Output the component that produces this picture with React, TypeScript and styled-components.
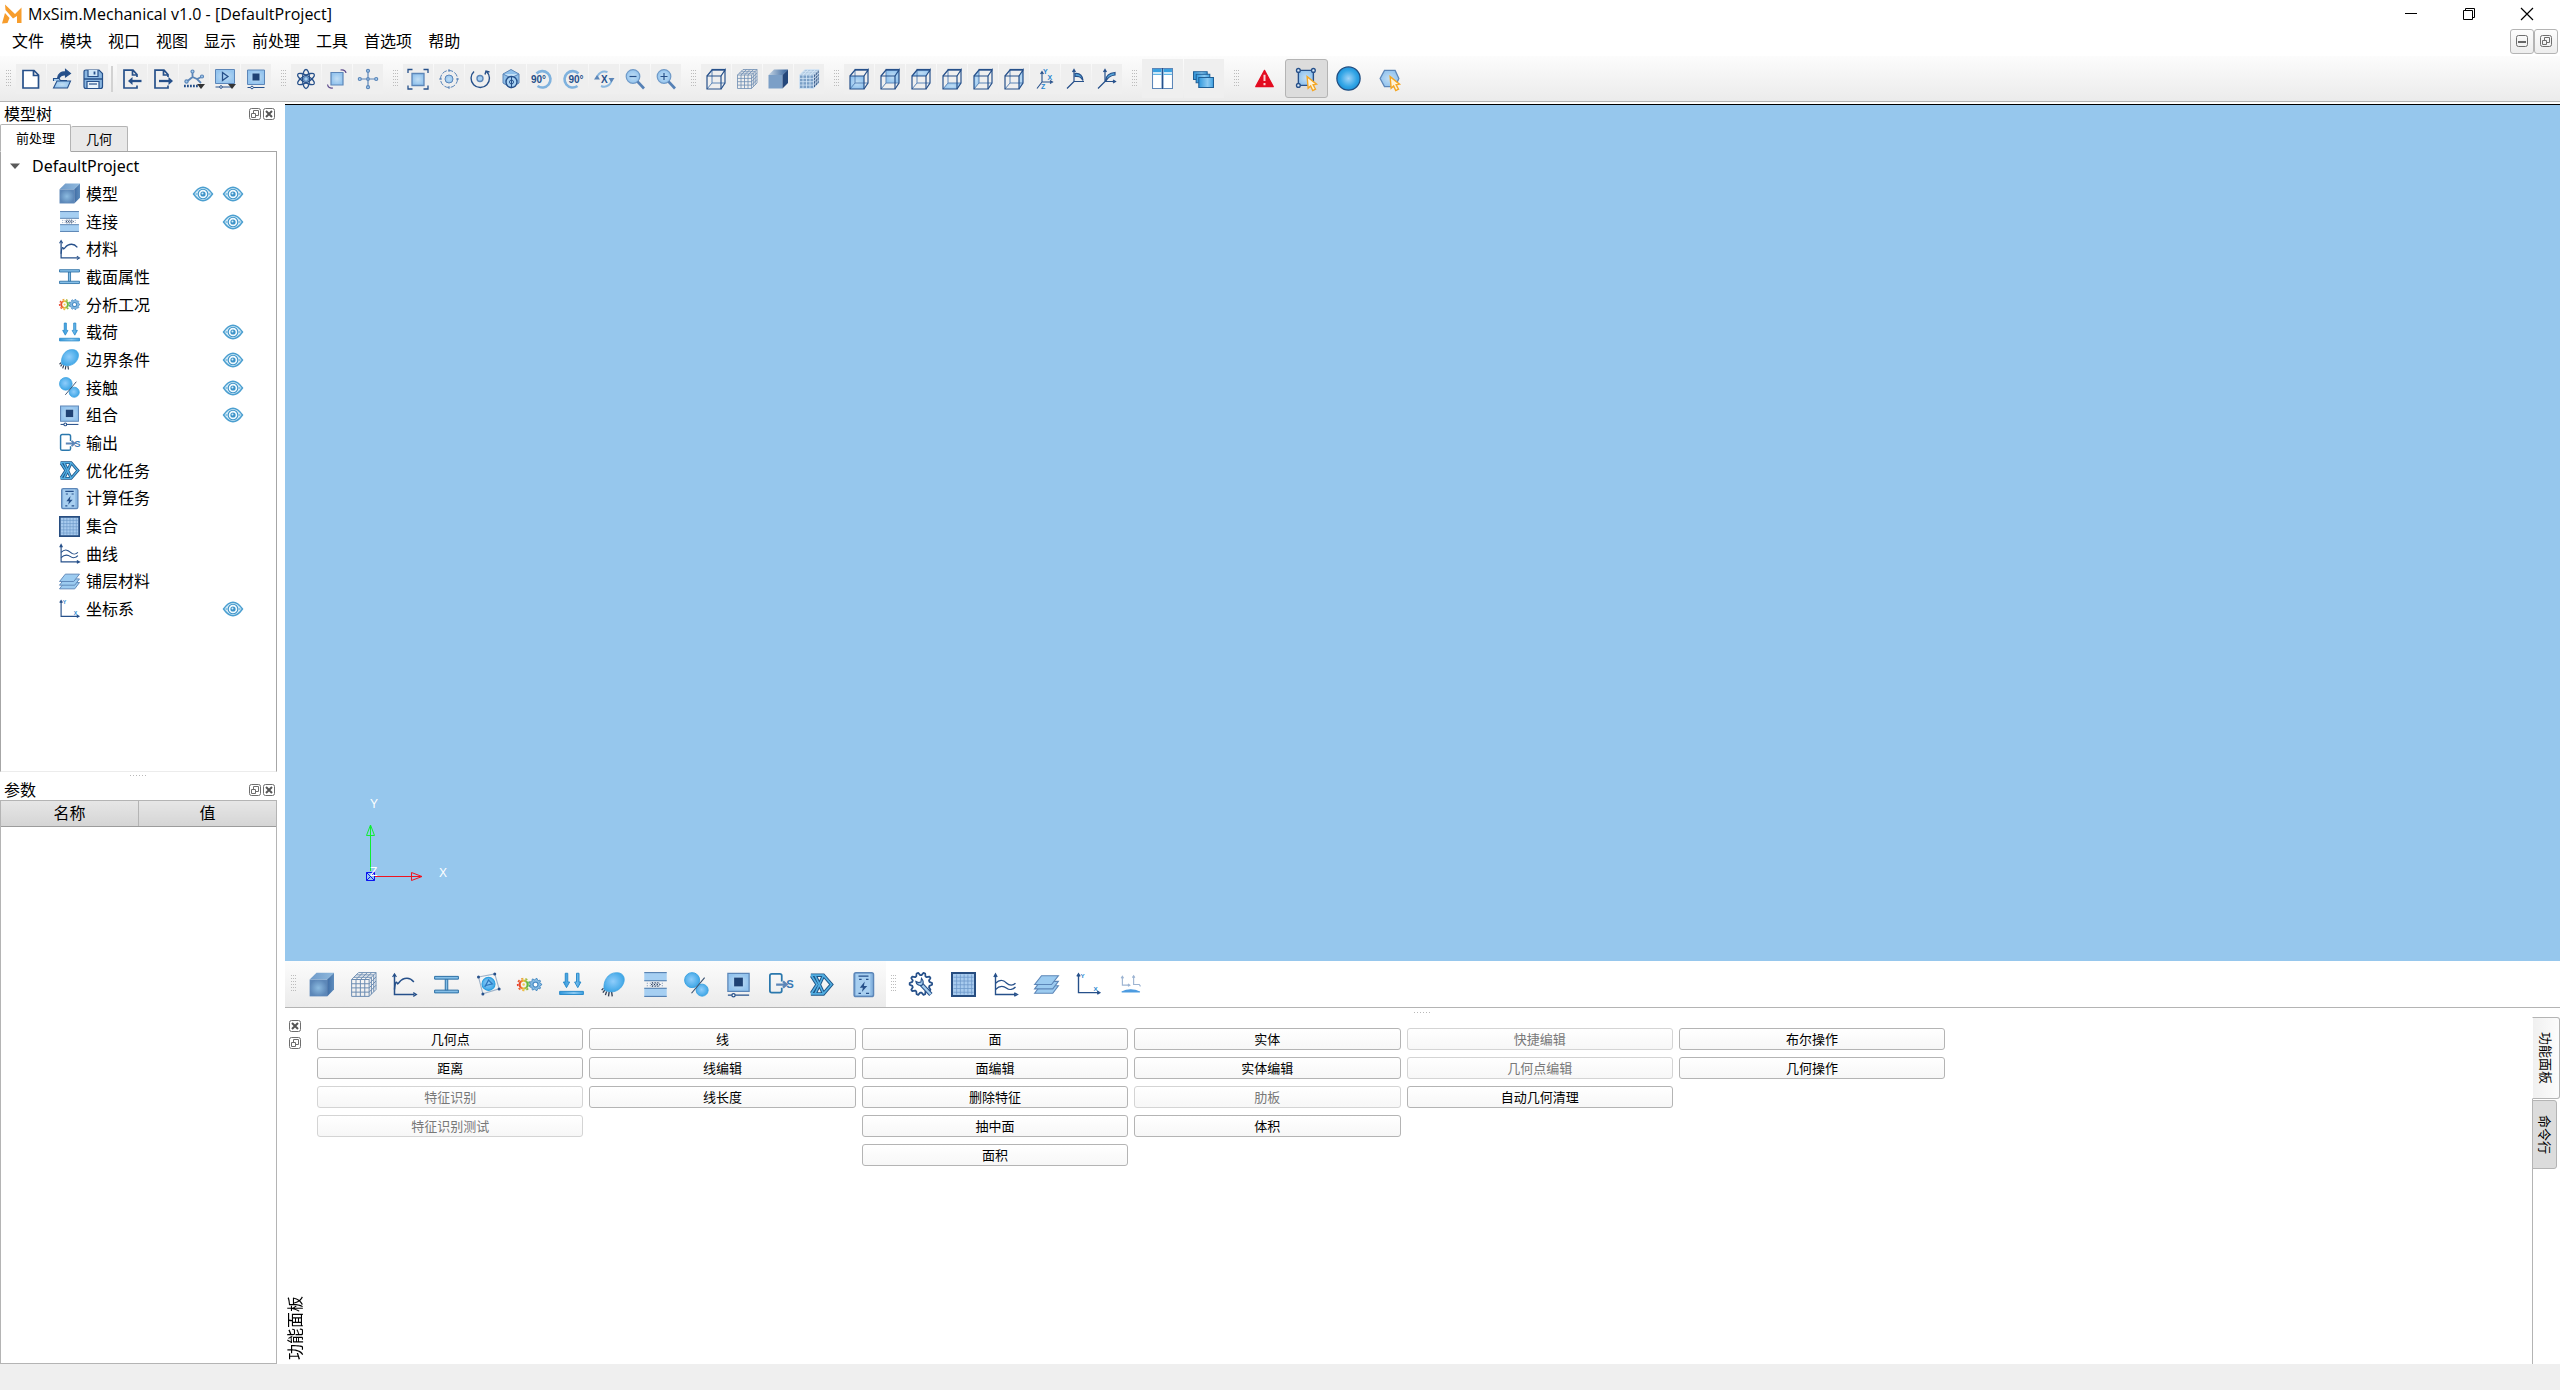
import React, { useState } from "react";
import styled, { createGlobalStyle, css } from "styled-components";

/* ---------- shared values ---------- */

const NAVY = "#26508a";
const STEEL = "#5c86b8";
const PALE = "#a6cff2";
const BRIGHT = "#2c9fe0";
const LINE = "#b4b4b4";

const GlobalStyle = createGlobalStyle`
  *, *::before, *::after { box-sizing: border-box; }
  body {
    margin: 0;
    background: #fff;
    color: #000;
    font-family: "Noto Sans", "Noto Sans CJK SC", sans-serif;
    font-size: 16px;
    line-height: 20px;
  }
  button {
    font: inherit;
    color: inherit;
    margin: 0;
    padding: 0;
    border: 0;
    background: none;
  }
`;

/* ---------- icon drawings, all on a 20 x 20 grid ---------- */

type Face = "front" | "back" | "top" | "bottom" | "left" | "right";

const faces: Record<Face, string> = {
  front: "M1 7H15V20H1Z",
  back: "M6 1H19V14H6Z",
  top: "M1 7L6 1H19L15 7Z",
  bottom: "M1 20L6 14H19L15 20Z",
  left: "M1 7L6 1V14L1 20Z",
  right: "M15 7L19 1V14L15 20Z",
};

const WireCube = ({ face }: { face?: Face }) => (
  <g fill="none" stroke={NAVY} strokeWidth="1.2">
    {face && <path d={faces[face]} fill="url(#sheet)" stroke="none" />}
    <path d="M6 1V14H19M6 14L1 20" stroke={STEEL} strokeWidth="1" />
    <path d="M1 7H15V20H1Z" />
    <path d="M1 7L6 1M15 7L19 1V14L15 20" />
    <path d="M5.500 0.800H19.500" strokeWidth="1.800" />
  </g>
);

const MeshCube = ({ solid }: { solid?: boolean }) => (
  <g fill="none" stroke={solid ? "#d5e7f7" : "#6d8db2"} strokeWidth="0.800">
    {solid && (
      <g stroke="none">
        <path d="M0.500 6H14.500V19.500H0.500Z" fill="#7a9fc6" />
        <path d="M0.500 6L6 0.500H20L14.500 6Z" fill="#a9c3dd" />
        <path d="M14.500 6L20 0.500V14L14.500 19.500Z" fill="#27497b" />
      </g>
    )}
    <path d="M0.500 6H14.500V19.500H0.500ZM0.500 9.400H14.500M0.500 12.700H14.500M0.500 16.100H14.500M4 6V19.500M7.500 6V19.500M11 6V19.500" />
    <path d="M0.500 6L6 0.500H20L14.500 6M4 6L9.500 0.500M7.500 6L13 0.500M11 6L16.500 0.500M2.300 4.200H16.300M4.200 2.300H18.200" />
    <path d="M14.500 19.500L20 14V0.500M14.500 9.400L20 3.900M14.500 12.700L20 7.200M14.500 16.100L20 10.600M16.300 4.200V17.700M18.200 2.300V15.800" />
  </g>
);

const SolidCube = ({ soft }: { soft?: boolean }) => (
  <g>
    <path d="M0.500 6H14.500V19.500H0.500Z" fill={soft ? "url(#cubeFront)" : "#7b9fc7"} />
    <path d="M0.500 6L6 0.500H20L14.500 6Z" fill={soft ? "url(#cubeTop)" : "url(#cubeLid)"} />
    <path d="M14.500 6L20 0.500V14L14.500 19.500Z" fill={soft ? "url(#cubeSide)" : "#25477a"} />
  </g>
);

const gearPath = (cx: number, cy: number, r: number, teeth: number) => {
  const pts: string[] = [];
  for (let i = 0; i < teeth * 4; i++) {
    const a = ((i - 0.5) / (teeth * 4)) * Math.PI * 2;
    const q = i % 4 < 2 ? r : r * 0.78;
    pts.push(`${(cx + Math.cos(a) * q).toFixed(2)} ${(cy + Math.sin(a) * q).toFixed(2)}`);
  }
  return `M${pts.join("L")}Z`;
};

const truss = "M1.500 2.500H11.500L18 10L11.500 17.500H1.500M2 3L6.500 10L2 17M5 3L11.500 17M11.500 3L5 17";

const Pointer = () => (
  <path d="M10.500 8.500L18 14.500L15.300 15L17.200 18.500L15 19.600L13.300 16L11.300 17.800Z" fill="#fff3d6" stroke="#f5a623" strokeWidth="1.100" />
);

const icons: Record<string, React.ReactNode> = {
  newFile: <path d="M2 1.500H13L17.500 6V19H2Z M12.500 1.500V6.500H17.500" fill="#fff" stroke={NAVY} strokeWidth="1.700" />,
  open: (
    <g stroke={NAVY} strokeWidth="1.100">
      <path d="M1.500 12V9.500H7L8.500 11.500H15" fill={PALE} />
      <path d="M1.500 19L5 12H18.500L15.500 19Z" fill="url(#sheet)" />
      <path d="M5.500 9.500C6 4 10 2.500 13.500 3V0.500L18.500 4.500L13.500 8V6C10.500 5.500 8.500 6.500 7 9.500Z" fill={NAVY} />
    </g>
  ),
  save: (
    <g stroke={NAVY} strokeWidth="1.200">
      <path d="M1 3Q1 1 3 1H16L19.500 4.500V17.500Q19.500 19.500 17.500 19.500H3Q1 19.500 1 17.500Z" fill="#8ab6e0" />
      <path d="M5 1V7.500H15V1" fill="#cfe6f8" />
      <path d="M11.500 2.500V5.500" strokeWidth="1.800" />
      <path d="M1 10H19.500" strokeWidth="1.500" />
      <path d="M4 19V12.500H16V19" fill="#eaf4fc" />
      <path d="M6 15H14" />
    </g>
  ),
  importFile: (
    <g fill="none" stroke={NAVY} strokeWidth="1.700">
      <path d="M15 8V5.500L11 1.200H2V19H15V16.500M10.500 1.500V6H15" />
      <path d="M19.500 12H9" strokeWidth="2.300" />
      <path d="M6 12L10.500 8V16Z" fill={NAVY} stroke="none" />
    </g>
  ),
  exportFile: (
    <g fill="none" stroke={NAVY} strokeWidth="1.700">
      <path d="M15 8V5.500L11 1.200H2V19H15V16.500M10.500 1.500V6H15" />
      <path d="M6 12H16" strokeWidth="2.300" />
      <path d="M20 12L15.500 8V16Z" fill={NAVY} stroke="none" />
    </g>
  ),
  script: (
    <g fill="none" stroke={STEEL} strokeWidth="1.200">
      <circle cx="8.500" cy="2.500" r="1.500" fill={PALE} />
      <path d="M8.500 4V8L3 12.500M8.500 8L13 10L17 14M13 10L17.500 8" strokeWidth="1.800" />
      <circle cx="2.500" cy="12.500" r="1.600" fill={PALE} />
      <circle cx="18" cy="7.500" r="1.500" fill={PALE} />
      <path d="M0 17H14" strokeWidth="2.600" stroke={NAVY} strokeDasharray="1.800 1.200" />
      <path d="M13 15H21L17 20Z" fill="#333" stroke="none" />
    </g>
  ),
  play: (
    <g stroke={STEEL}>
      <path d="M0.500 0.500H19.500V14.500H0.500Z" fill="url(#sheet)" />
      <path d="M7.500 3.500L13 7.500L7.500 11.500Z" fill={PALE} stroke={NAVY} strokeWidth="1.300" />
      <path d="M0.500 18H17" stroke={NAVY} />
      <circle cx="6" cy="18" r="1.300" fill="#fff" stroke={NAVY} />
      <path d="M13 15H21L17 20Z" fill="#333" stroke="none" />
    </g>
  ),
  assembly: (
    <g stroke={STEEL}>
      <path d="M1.500 1H18.500V15.500H1.500Z" fill="url(#sheet)" />
      <path d="M6.500 4.500H13.500V11.500H6.500Z" fill="#1f4274" stroke="none" />
      <path d="M1.500 18.500H18.500" stroke={NAVY} />
      <circle cx="6" cy="18.500" r="1.300" fill="#fff" stroke={NAVY} />
    </g>
  ),
  atom: (
    <g fill="none" stroke={NAVY} strokeWidth="1.300">
      <ellipse cx="10" cy="10" rx="3.500" ry="9.500" />
      <ellipse cx="10" cy="10" rx="3.500" ry="9.500" transform="rotate(60 10 10)" />
      <ellipse cx="10" cy="10" rx="3.500" ry="9.500" transform="rotate(120 10 10)" />
      <circle cx="10" cy="10" r="2.400" fill={PALE} stroke={STEEL} />
    </g>
  ),
  rotateBox: (
    <g fill="none" stroke={STEEL} strokeWidth="1.200">
      <path d="M4 3.500H16V16H4Z" fill="url(#sheet)" />
      <path d="M13.500 1C17 0.500 18.500 1.500 19 4M6 19C3 19.500 1 18.500 0.500 15.500" stroke="#5d4a8c" />
    </g>
  ),
  pan: (
    <g fill={PALE} stroke={STEEL} strokeWidth="1.200">
      <path d="M10 2V18M2 10H18" />
      <circle cx="10" cy="1.800" r="1.500" /><circle cx="10" cy="18.200" r="1.500" />
      <circle cx="1.800" cy="10" r="1.500" /><circle cx="18.200" cy="10" r="1.500" />
      <circle cx="10" cy="10" r="1.300" />
    </g>
  ),
  fit: (
    <g fill="none" stroke={STEEL} strokeWidth="1.300">
      <path d="M4 4.500H16V16.500H4Z" fill="url(#sheet)" />
      <path d="M0 4V0.500H4.500M15.500 0.500H20V4M20 16.500V20H15.500M4.500 20H0V16.500" stroke={NAVY} />
    </g>
  ),
  target: (
    <g fill="none" stroke={STEEL} strokeWidth="1">
      <circle cx="10" cy="10" r="8.500" strokeDasharray="5 1.500" />
      <path d="M10 0V3M10 17V20M0 10H3M17 10H20" />
      <circle cx="10" cy="10" r="4" fill="url(#sheet)" />
    </g>
  ),
  spin: (
    <g fill="none" stroke={NAVY} strokeWidth="1.400">
      <path d="M4 2.500A9.200 9.200 0 1 0 16.500 2.500M15 5.500L16 2L19.500 3" />
      <circle cx="10" cy="9.500" r="3" fill={PALE} stroke={STEEL} />
    </g>
  ),
  isoCube: (
    <g stroke={STEEL} strokeWidth="1">
      <path d="M2 5L10 0.500L18 5V14L10 19L2 14Z" fill="#8fbfe9" />
      <path d="M2 5L10 9L18 5" fill="#c3e0f7" />
      <circle cx="10.500" cy="13" r="5.500" fill="#a9d2f3" stroke={NAVY} strokeWidth="1.400" />
      <circle cx="10.500" cy="13" r="2" fill="none" stroke={NAVY} />
      <path d="M10.500 8V18" stroke={NAVY} />
    </g>
  ),
  zoomOut: (
    <g stroke="#6f9ac8" strokeWidth="1.200">
      <circle cx="8" cy="7.500" r="6.800" fill="url(#sheet)" />
      <path d="M12.500 12.500L19 19.500" stroke="#5580b5" strokeWidth="2.600" />
      <path d="M4.500 7.500H11.500" stroke={NAVY} />
    </g>
  ),
  zoomIn: (
    <g stroke="#6f9ac8" strokeWidth="1.200">
      <circle cx="8" cy="7.500" r="6.800" fill="url(#sheet)" />
      <path d="M12.500 12.500L19 19.500" stroke="#5580b5" strokeWidth="2.600" />
      <path d="M4.500 7.500H11.500M8 4V11" stroke={NAVY} />
    </g>
  ),
  turnLeft: (
    <g fill="none" stroke="#7fb2de" strokeWidth="2.600">
      <path d="M4.500 4.500A8.200 8.200 0 1 1 5.500 17" />
      <text x="-1" y="13.500" fill={NAVY} stroke="none" fontSize="10" fontWeight="700" fontFamily="Liberation Sans, sans-serif">90°</text>
    </g>
  ),
  turnRight: (
    <g fill="none" stroke="#7fb2de" strokeWidth="2.600">
      <path d="M15.500 4.500A8.200 8.200 0 1 0 14.500 17" />
      <text x="5.500" y="13.500" fill={NAVY} stroke="none" fontSize="10" fontWeight="700" fontFamily="Liberation Sans, sans-serif">90°</text>
    </g>
  ),
  flip: (
    <g fill="none" stroke="#8ab8e0" strokeWidth="2">
      <path d="M3 10A7.500 7.500 0 0 1 13.500 3.200M17.500 9A7.500 7.500 0 0 1 7 17" />
      <path d="M0 10.500L3 6L6 10.500ZM14.500 9H20.500L17.500 13.500Z" fill={STEEL} stroke="none" />
      <text x="7" y="13.500" fill={NAVY} stroke="none" fontSize="10" fontWeight="700" fontFamily="Liberation Sans, sans-serif">X</text>
    </g>
  ),
  wire: <WireCube />,
  faceFront: <WireCube face="front" />,
  faceBack: <WireCube face="back" />,
  faceTop: <WireCube face="top" />,
  faceBottom: <WireCube face="bottom" />,
  faceLeft: <WireCube face="left" />,
  faceRight: <WireCube face="right" />,
  mesh: <MeshCube />,
  meshSolid: <MeshCube solid />,
  solid: <SolidCube />,
  model: <SolidCube soft />,
  axes: (
    <g fill="none" stroke={NAVY} strokeWidth="1.100">
      <path d="M7 3V13H16M7 13L2 19.500M15 11.500L17.500 13L15 14.500M5.500 5L7 2.500L8.500 5" />
      <g fill="#2a86d0" stroke="none" fontSize="7" fontWeight="700" fontFamily="Liberation Sans, sans-serif">
        <text x="8" y="4.500">Y</text><text x="12.500" y="11">X</text><text x="6" y="20">Z</text>
      </g>
    </g>
  ),
  axesFront: (
    <g fill="none" stroke={NAVY} strokeWidth="1.200">
      <path d="M8 1V12.500H18M8 12.500L1 19.500M6.500 3L8 0.500L9.500 3" />
      <path d="M9 4.500C14 4 16.500 7 17 11.500C14.500 7.500 12.500 7 9 7.500Z" fill="#58a8dc" />
    </g>
  ),
  axesBack: (
    <g fill="none" stroke={NAVY} strokeWidth="1.200">
      <path d="M8 1V12.500H18M8 12.500L1 19.500M6.500 3L8 0.500L9.500 3M16 11L18.500 12.500L16 14" />
      <path d="M8.500 11.500C9 7 12 4 18 3.500V6C13.500 6.500 11 8 9 12Z" fill="#58a8dc" />
    </g>
  ),
  columns: (
    <g fill="#fff" stroke={STEEL} strokeWidth="1">
      <path d="M0.500 0.500H9.500V19.500H0.500ZM10.500 0.500H19.500V19.500H10.500Z" />
      <path d="M1 1H9V4H1ZM11 1H19V4H11Z" fill="#3aa0e0" stroke="none" />
      <path d="M1 6H9M11 6H19" stroke={BRIGHT} />
      <path d="M10 0V20" stroke={NAVY} />
    </g>
  ),
  cascade: (
    <g fill="url(#window)" stroke="#1f5f96" strokeWidth="1">
      <path d="M0.500 3.500H13.500V11H0.500Z" />
      <path d="M3 6H16V14H3Z" />
      <path d="M5.500 9H19.500V18.500H5.500Z" />
    </g>
  ),
  warning: (
    <g>
      <path d="M10 3.500L17 16.500H3Z" fill="#e30b20" stroke="#e30b20" strokeWidth="1" strokeLinejoin="round" />
      <path d="M10 7V12M10 13.500V15.300" stroke="#fbd3d6" strokeWidth="1.600" />
    </g>
  ),
  boxSelect: (
    <g fill="none" stroke={NAVY} strokeWidth="1.100">
      <path d="M3.500 3.500H15.500V15.500H3.500Z" fill="url(#sheet)" />
      <g fill="#dcebf8">
        <circle cx="3.500" cy="3.500" r="1.500" /><circle cx="15.500" cy="3.500" r="1.500" />
        <circle cx="3.500" cy="15.500" r="1.500" />
      </g>
      <Pointer />
    </g>
  ),
  circleSelect: <circle cx="10" cy="10" r="9.300" fill="url(#disc)" stroke="#214d80" strokeWidth="1" />,
  polySelect: (
    <g>
      <path d="M6 3.500H14.500L17.500 10L14.500 16.500H6L2.500 10Z" fill="url(#sheet)" stroke={STEEL} strokeWidth="1" />
      <Pointer />
    </g>
  ),
  connect: (
    <g>
      <path d="M1 0.500H19V7H1ZM1 13H19V19.500H1Z" fill={PALE} />
      <path d="M1 0.500H19M1 7H19M1 13H19M1 19.500H19" stroke="#4674a8" strokeWidth="0.800" />
      <path d="M3 9H17M3 11H17" stroke="#8aa3c2" strokeWidth="0.800" strokeDasharray="1 1.400" />
      <path d="M6.500 10H14M7 8.700H13M7 11.300H13" stroke="#1c355c" strokeWidth="0.900" strokeDasharray="1 1.200" />
    </g>
  ),
  material: (
    <g fill="none" stroke={NAVY} strokeWidth="1.200">
      <path d="M2 2V18H18" />
      <path d="M0.500 4L2 1.500L3.500 4M17 16.500L19.500 18L17 19.500" strokeWidth="1" />
      <path d="M2 14C2.500 8 3.500 7 4.500 9.500C6 9 6.500 5 12 5Q15 5 17.500 8" />
    </g>
  ),
  section: (
    <g fill="#85bfe8" stroke="#2b6fa5" strokeWidth="0.800">
      <path d="M9 5.500H11V15H9Z" />
      <path d="M0.500 3.500H19.500V5.700H0.500ZM0.500 14.500H19.500V16.700H0.500Z" />
    </g>
  ),
  particles: (
    <g fill="none" stroke="#9fb3c9" strokeWidth="0.900">
      <path d="M2 4L15 1.500L18.500 13.500L5.500 17.500Z" />
      <circle cx="10" cy="9.500" r="5.200" fill="url(#ball)" stroke={BRIGHT} />
      <path d="M7 12L10 6.500L13 9.500L7 11" stroke="#2d76bd" strokeWidth="1" />
      <g fill={NAVY} stroke="none">
        <circle cx="2" cy="4" r="1.200" /><circle cx="15" cy="1.500" r="1.200" />
        <circle cx="18.500" cy="13.500" r="1.200" /><circle cx="5.500" cy="17.500" r="1.200" />
      </g>
    </g>
  ),
  analysis: (
    <g fill="none">
      <circle cx="5.300" cy="10" r="3.200" stroke="url(#rainbow)" strokeWidth="1.800" />
      <circle cx="5.300" cy="10" r="4.700" stroke="url(#rainbow)" strokeWidth="1.400" strokeDasharray="1.700 1.580" />
      <circle cx="5.300" cy="10" r="1" fill="#f0c95a" />
      <path d={gearPath(14.8, 10, 4.9, 9)} fill="#86bbe4" stroke="#4b8dc4" strokeWidth="0.800" />
      <circle cx="14.800" cy="10" r="2" fill="#fff" stroke="#4b8dc4" strokeWidth="1" />
    </g>
  ),
  load: (
    <g fill="url(#window)" stroke="#2d8ccb" strokeWidth="0.800">
      <path d="M5 1H7V8H8.500L6 12.500L3.500 8H5ZM14 1H16V8H17.500L15 12.500L12.500 8H14Z" />
      <path d="M0.500 15.500H19.500V18H0.500Z" />
    </g>
  ),
  boundary: (
    <g>
      <path d="M2 13L0.500 14.500M3 14.500L1.500 16.500M4.500 15.500L3.500 18.500M6.500 16L6 19.500M8.500 16L9 19.500" stroke="#333f55" strokeWidth="1.100" />
      <path d="M2.500 14C1.500 8 5 0.500 12.500 0.500C19 0.500 20 6.500 17 11C14 16 7 17.500 2.500 14Z" fill="url(#ball)" stroke="#3aa0e0" strokeWidth="0.600" />
    </g>
  ),
  contact: (
    <g>
      <circle cx="6.500" cy="6.500" r="6" fill="url(#ball)" stroke="#3fa4e2" strokeWidth="0.800" />
      <circle cx="14.500" cy="14.500" r="4.800" fill="url(#ball)" stroke="#3fa4e2" strokeWidth="0.800" />
      <path d="M16.500 4.500L6 17" stroke="#38506f" strokeWidth="0.900" />
    </g>
  ),
  output: (
    <g fill="none" stroke="#2b78ad" strokeWidth="1.400">
      <path d="M11 7.500V3Q11 1.500 9.500 1.500H3Q1.500 1.500 1.500 3V15Q1.500 16.500 3 16.500H9.500Q11 16.500 11 15V12.500" />
      <path d="M6.500 10H14M12 7.500L14.800 10L12 12.500" stroke={STEEL} strokeWidth="1.800" />
      <text x="14.500" y="13" fill="#3a78b4" stroke="none" fontSize="9" fontWeight="700" fontFamily="Liberation Sans, sans-serif">S</text>
    </g>
  ),
  optimize: (
    <g fill="none">
      <path d={truss} stroke="#1d5486" strokeWidth="2.800" />
      <path d={truss} stroke="#52aee2" strokeWidth="1.300" />
    </g>
  ),
  job: (
    <g>
      <rect x="2.500" y="0.600" width="15.500" height="19" rx="1.500" fill="#8ab7e2" stroke={STEEL} strokeWidth="1.200" />
      <rect x="4" y="1.500" width="11.500" height="17" fill="#a8cff0" />
      <path d="M6 3.200H14M6.500 5.800H8.500M12 5.800H14M6 17H8M12 17H14.500" stroke={NAVY} strokeWidth="1" />
      <path d="M11 7.500L7 12.500H9.500L8.700 16L13 11.200H10.300Z" fill={NAVY} />
    </g>
  ),
  set: (
    <g>
      <path d="M0.800 0.800H19.200V19.200H0.800Z" fill="#a8cbee" stroke="#274d80" strokeWidth="1.600" />
      <path d="M4.500 2V18M7.500 2V18M10.500 2V18M13.500 2V18M16.500 2V18M2 4.200H18M2 7.200H18M2 10.200H18M2 13.200H18M2 16.200H18" stroke="#6b97c8" strokeWidth="0.600" />
    </g>
  ),
  curve: (
    <g fill="none" stroke={NAVY} strokeWidth="1.100">
      <path d="M2 2V18H18M0.700 4L2 1.500L3.300 4M17 16.700L19.500 18L17 19.300" />
      <path d="M2 9C6 5 9 7 11 9C13 11 16 11 18 9M2 14C6 10 9 11.500 11 13C13 14.500 16 14 18 12" />
    </g>
  ),
  layers: (
    <g fill="#9ccbf0" stroke={STEEL} strokeWidth="0.900">
      <path d="M0.500 17L5 11H19.500L15 17Z" />
      <path d="M0.500 13.500L5 7.500H19.500L15 13.500Z" />
      <path d="M0.500 10L6 3H19.500L14 10Z" />
    </g>
  ),
  csys: (
    <g fill="none" stroke={NAVY} strokeWidth="1.100">
      <path d="M2 2V16.500H18M0.700 3.500L2 1.500L3.300 3.500M17 15.300L19 16.500L17 17.700" />
      <g fill="#2a86d0" stroke="none" fontSize="5" fontWeight="700" fontFamily="Liberation Sans, sans-serif">
        <text x="3.500" y="4.500">Y</text><text x="14" y="15">X</text>
      </g>
    </g>
  ),
  gearTool: (
    <g fill="none" stroke={NAVY}>
      <path d={gearPath(9.5, 9.5, 9, 10)} fill="#fff" strokeWidth="1.400" strokeLinejoin="round" />
      <path d="M10 10L17.500 18" strokeWidth="3.600" />
      <path d="M10 10L17.300 17.800" stroke="#a8cff0" strokeWidth="1.800" />
      <path d="M5.500 7.500A3.600 3.600 0 0 0 10.500 10.500Q12.500 8 10 5L9.500 8L7.500 8.500Z" fill="#a8cff0" strokeWidth="0.900" />
    </g>
  ),
  csysLocal: (
    <g fill="none" stroke="#9db4d2" strokeWidth="0.900">
      <path d="M3.500 4V10.500H9M12.500 3.500V10H17L18 11.500M2.500 5L3.500 3.500L4.500 5M11.500 4.500L12.500 3L13.500 4.500M8 9.500L9.500 10.500L8 11.500" />
      <path d="M3 16Q10 12.500 17.500 16Z" fill="#4d9be0" stroke="#4d9be0" />
    </g>
  ),
};

const Svg = styled.svg<{ $size: number }>`
  display: block;
  flex: none;
  width: ${(p) => p.$size}px;
  height: ${(p) => p.$size}px;
  overflow: visible;
`;

const Icon = ({ name, size }: { name: string; size: number }) => (
  <Svg $size={size} viewBox="0 0 20 20" aria-hidden="true">{icons[name]}</Svg>
);

const GradientSheet = styled.svg`
  position: absolute;
  width: 0;
  height: 0;
`;

const Gradients = () => (
  <GradientSheet aria-hidden="true">
    <defs>
      <radialGradient id="sheet"><stop offset="0" stopColor="#c2def4" /><stop offset="1" stopColor="#94c4ee" /></radialGradient>
      <radialGradient id="ball" cx="0.450" cy="0.450" r="0.600"><stop offset="0" stopColor="#8fcdfb" /><stop offset="1" stopColor="#38a3e4" /></radialGradient>
      <radialGradient id="disc"><stop offset="0" stopColor="#9fd3f8" /><stop offset="0.700" stopColor="#33a5e6" /><stop offset="1" stopColor="#1e94da" /></radialGradient>
      <linearGradient id="window"><stop offset="0" stopColor="#2f97dc" /><stop offset="0.600" stopColor="#8ccaf2" /><stop offset="1" stopColor="#3fa0e0" /></linearGradient>
      <radialGradient id="cubeFront"><stop offset="0" stopColor="#8cbbe0" /><stop offset="1" stopColor="#5c87b8" /></radialGradient>
      <linearGradient id="cubeTop"><stop offset="0" stopColor="#6f9ac8" /><stop offset="1" stopColor="#8fb9de" /></linearGradient>
      <linearGradient id="cubeSide"><stop offset="0" stopColor="#3f6da5" /><stop offset="1" stopColor="#5f8dbd" /></linearGradient>
      <linearGradient id="cubeLid"><stop offset="0" stopColor="#c5d5e4" /><stop offset="1" stopColor="#33619b" /></linearGradient>
      <linearGradient id="rainbow"><stop offset="0" stopColor="#e8452f" /><stop offset="0.500" stopColor="#eec23c" /><stop offset="1" stopColor="#58b848" /></linearGradient>
    </defs>
  </GradientSheet>
);

/* ---------- window frame ---------- */

const Window = styled.div`
  display: flex;
  flex-direction: column;
  min-height: 100vh;
  background: #fff;
`;

const TitleBar = styled.header`
  display: flex;
  align-items: center;
  height: 28px;
  padding: 0 4px 0 2px;
`;

const Title = styled.h1`
  flex: 1;
  margin: 0 0 0 6px;
  font-family: "Open Sans", "Noto Sans CJK SC", sans-serif;
  font-size: 16px;
  font-weight: 400;
`;

const WindowControls = styled.div`
  display: flex;
`;

const WindowButton = styled.button`
  display: grid;
  place-items: center;
  width: 58px;
  height: 26px;
`;

const MenuBar = styled.nav`
  display: flex;
  align-items: center;
  height: 28px;
  padding: 0 2px 2px 4px;
`;

const MenuItem = styled.button`
  padding: 0 8px;
  line-height: 24px;
`;

const MdiControls = styled.div`
  display: flex;
  margin-left: auto;
`;

const MdiButton = styled.button`
  display: grid;
  place-items: center;
  width: 24px;
  height: 25px;
  border: 1px solid ${LINE};
  border-radius: 3px;
  background: linear-gradient(#fdfdfd, #ededed);
`;

const barFill = css`
  background: linear-gradient(#fcfcfc, #ebebeb);
`;

const TopToolbar = styled.div`
  ${barFill}
  display: flex;
  align-items: center;
  height: 46px;
  border-bottom: 1px solid ${LINE};
`;

const ToolGroup = styled.div<{ $lead: number; $width?: number }>`
  display: flex;
  align-items: center;
  gap: 1px;
  padding-left: ${(p) => p.$lead}px;
  ${(p) => p.$width && css`width: ${p.$width}px;`}
`;

const Grip = styled.span`
  flex: none;
  width: 6px;
  height: 18px;
  margin-right: 3px;
  background: repeating-linear-gradient(90deg, #bcbcbc 0 1px, transparent 1px 2px);
  mask-image: repeating-linear-gradient(#000 0 1px, transparent 1px 3px);
`;

const ToolButton = styled.button<{ $wide?: boolean; $plain?: boolean; $pressed?: boolean }>`
  display: grid;
  place-items: center;
  ${(p) => (p.$wide ? css`flex: 1;` : css`width: 30px;`)}
  height: ${(p) => (p.$wide ? 39 : 30)}px;
  background: ${(p) => (p.$plain ? "none" : "#efefef")};
  ${(p) => p.$pressed && css`
    background: #dcdcdc;
    border: 1px solid ${LINE};
    border-radius: 3px;
  `}
`;

const ToolDivider = styled.span`
  width: 7px;
  height: 26px;
  border-left: 2px solid transparent;
  border-right: 3px solid transparent;
  background: #d2d2d2 content-box;
`;

/* ---------- work area ---------- */

const Main = styled.main`
  flex: 1;
  display: grid;
  grid-template-columns: 277px minmax(0, 1fr);
  column-gap: 8px;
`;

const Sidebar = styled.aside`
  display: flex;
  flex-direction: column;
`;

const Dock = styled.section<{ $share: number }>`
  flex: ${(p) => p.$share} 1 0;
  display: flex;
  flex-direction: column;
`;

const DockTitle = styled.header`
  display: flex;
  align-items: center;
  gap: 2px;
  height: 22px;
  padding: 2px 2px 0 4px;
`;

const DockName = styled.h2`
  flex: 1;
  margin: 0;
  font-size: 16px;
  font-weight: 400;
`;

const DockButton = styled.button`
  display: block;
  width: 12px;
  height: 12px;
`;

const Splitter = styled.div<{ $height: number }>`
  display: grid;
  place-items: center;
  height: ${(p) => p.$height}px;
  &::after {
    content: "";
    width: 18px;
    height: 1px;
    background: repeating-linear-gradient(90deg, #b8b8b8 0 1px, transparent 1px 3px);
  }
`;

const Tabs = styled.div`
  display: flex;
  align-items: flex-end;
  height: 27px;
`;

const Tab = styled.button<{ $active: boolean }>`
  position: relative;
  padding: 0 15px;
  border: 1px solid ${LINE};
  border-radius: 2px 2px 0 0;
  font-size: 13px;
  ${(p) => p.$active
    ? css`
        height: 28px;
        margin-bottom: -1px;
        border-bottom-color: #fff;
        background: #fff;
      `
    : css`
        height: 25px;
        border-left: 0;
        border-bottom: 0;
        background: #e9e9e9;
      `}
`;

const TreePane = styled.div`
  flex: 1;
  border: 1px solid #a6a6a6;
  border-bottom-color: #ececec;
`;

const TreeRoot = styled.button`
  display: flex;
  align-items: center;
  gap: 12px;
  height: 28px;
  padding: 0 0 1px 9px;
`;

const TreeList = styled.ul`
  display: grid;
  grid-auto-rows: 1fr;
  height: 443px;
  margin: 0;
  padding: 0 33px 0 58px;
  list-style: none;
`;

const TreeItem = styled.li`
  display: flex;
  align-items: center;
  gap: 6px;
`;

const TreeLabel = styled.span`
  flex: 1;
`;

const EyeButton = styled.button`
  display: block;
  width: 20px;
  & + & { margin-left: 4px; }
`;

const ParamTable = styled.table`
  width: 100%;
  border-collapse: collapse;
  table-layout: fixed;
`;

const ParamHead = styled.th`
  height: 25px;
  padding: 0;
  border-bottom: 1px solid #9c9c9c;
  background: linear-gradient(#e6e6e6, #d5d5d5);
  font-weight: 400;
  & + & { border-left: 1px solid ${LINE}; }
`;

const ParamPane = styled.div`
  flex: 1;
  border: 1px solid ${LINE};
`;

const Workspace = styled.div`
  display: flex;
  flex-direction: column;
  padding-top: 2px;
`;

const Viewport = styled.div`
  position: relative;
  flex: 1;
  border-top: 1px solid #000;
  background: #96c7ed;
`;

const AxisTriad = styled.svg`
  position: absolute;
  left: 76px;
  bottom: 76px;
  width: 100px;
  height: 100px;
`;

const ModuleBar = styled.div`
  display: flex;
  height: 47px;
  border-bottom: 1px solid ${LINE};
`;

const ModuleGroup = styled(ToolGroup)<{ $filled?: boolean }>`
  padding-right: 2px;
  ${(p) => p.$filled && barFill}
`;

const Panel = styled.section`
  display: flex;
  flex-direction: column;
  height: 356px;
`;

const PanelBody = styled.div`
  flex: 1;
  display: flex;
`;

const PanelStrip = styled.header`
  display: flex;
  flex-direction: column;
  align-items: center;
  gap: 5px;
  width: 32px;
  padding: 3px 12px 4px 0;
`;

const PanelName = styled.h2`
  margin: auto 0 0;
  font-size: 16px;
  font-weight: 400;
  writing-mode: vertical-rl;
  text-orientation: sideways;
  transform: rotate(180deg);
`;

const CommandGrid = styled.div`
  flex: 1;
  display: grid;
  grid-template-columns: repeat(8, 1fr);
  align-items: start;
  column-gap: 6px;
  padding: 11px 42px 0 0;
`;

const CommandColumn = styled.div`
  display: grid;
  gap: 7px;
`;

const Command = styled.button`
  height: 22px;
  border: 1px solid ${LINE};
  border-radius: 3px;
  background: linear-gradient(#fff, #f7f7f7);
  font-size: 13px;
  line-height: 20px;
  &:disabled {
    border-color: #d4d4d4;
    color: #787878;
  }
`;

const SideTabs = styled.div`
  display: flex;
  flex-direction: column;
  align-items: flex-start;
  gap: 1px;
  width: 28px;
  box-shadow: inset 1px 0 ${LINE};
`;

const SideTab = styled.button<{ $active: boolean }>`
  width: ${(p) => (p.$active ? 28 : 25)}px;
  padding: 14px 0;
  border: 1px solid ${LINE};
  border-left-color: ${(p) => (p.$active ? "#fff" : LINE)};
  border-radius: 0 3px 3px 0;
  background: ${(p) => (p.$active ? "linear-gradient(90deg, #f0f0f0, #fcfcfc)" : "#dcdcdc")};
  font-size: 13px;
  writing-mode: vertical-rl;
  text-orientation: sideways;
`;

const StatusBar = styled.footer`
  height: 26px;
  background: #efefef;
`;

/* ---------- small drawings ---------- */

const FloatGlyph = () => (
  <Svg $size={12} viewBox="0 0 12 12" aria-hidden="true">
    <rect x="0.500" y="0.500" width="11" height="11" rx="2" fill="none" stroke="#6e6e6e" />
    <path d="M2.500 5.500H6.500V9.500H2.500ZM4.500 5V2.500H9.500V7.500H7" fill="none" stroke="#6e6e6e" />
  </Svg>
);

const CloseGlyph = () => (
  <Svg $size={12} viewBox="0 0 12 12" aria-hidden="true">
    <rect x="0.500" y="0.500" width="11" height="11" rx="2" fill="none" stroke="#6e6e6e" />
    <path d="M3 3L9 9M9 3L3 9" stroke="#555" strokeWidth="2" />
  </Svg>
);

const MinGlyph = () => (
  <Svg $size={12} viewBox="0 0 12 12" aria-hidden="true">
    <rect x="0.500" y="0.500" width="11" height="11" rx="2" fill="none" stroke="#6e6e6e" />
    <path d="M2 7H10" stroke="#666" strokeWidth="2" />
  </Svg>
);

const EyeGlyph = () => (
  <Svg $size={20} viewBox="0 0 20 20" aria-hidden="true">
    <path d="M0.500 10Q10 -3.500 19.500 10Q10 23.500 0.500 10Z" fill="#d4ebf8" stroke="#4b9fd0" strokeWidth="1.400" />
    <circle cx="10" cy="10" r="4.800" fill="#f2fafe" stroke="#3d93c8" strokeWidth="1.100" />
    <circle cx="10" cy="10" r="2.600" fill="#3d93c8" />
    <path d="M2.500 10H4.500M15.500 10H17.500" stroke="#4b9fd0" />
    <circle cx="9.500" cy="9.500" r="1" fill="#d9effb" />
  </Svg>
);

const Logo = () => (
  <Svg $size={20} viewBox="0 0 20 20" aria-hidden="true">
    <path d="M3 0.500L13 10L19.500 3.500V19H15V12L11 14.500L3.500 6Z" fill="#f79d2c" />
    <path d="M0 19.500L3 9L7.500 14L5.500 19Z" fill="#f79d2c" />
  </Svg>
);

/* ---------- content ---------- */

type Tool = [icon: string, label: string];

const topGroups: Tool[][] = [
  [["newFile", "新建"], ["open", "打开"], ["save", "保存"], ["|", ""], ["importFile", "导入"], ["exportFile", "导出"], ["script", "脚本"], ["play", "运行"], ["assembly", "组合"]],
  [["atom", "旋转"], ["rotateBox", "框转"], ["pan", "平移"]],
  [["fit", "适应窗口"], ["target", "中心"], ["spin", "自转"], ["isoCube", "轴测"], ["turnLeft", "左转"], ["turnRight", "右转"], ["flip", "翻转"], ["zoomOut", "缩小"], ["zoomIn", "放大"]],
  [["wire", "线框"], ["mesh", "网格线框"], ["solid", "实体"], ["meshSolid", "网格实体"]],
  [["faceFront", "前视"], ["faceBack", "后视"], ["faceTop", "俯视"], ["faceBottom", "仰视"], ["faceLeft", "左视"], ["faceRight", "右视"], ["axes", "坐标轴"], ["axesFront", "正向"], ["axesBack", "反向"]],
];

const windowTools: Tool[] = [["columns", "并排"], ["cascade", "层叠"]];
const selectTools: Tool[] = [["warning", "警告"], ["boxSelect", "框选"], ["circleSelect", "圆选"], ["polySelect", "多边形选"]];

const moduleTools: Tool[] = [
  ["model", "模型"], ["mesh", "网格"], ["material", "材料"], ["section", "截面属性"], ["particles", "质点"],
  ["analysis", "分析工况"], ["load", "载荷"], ["boundary", "边界条件"], ["connect", "连接"], ["contact", "接触"],
  ["assembly", "组合"], ["output", "输出"], ["optimize", "优化任务"], ["job", "计算任务"],
];
const extraTools: Tool[] = [["gearTool", "设置"], ["set", "集合"], ["curve", "曲线"], ["layers", "铺层材料"], ["csys", "坐标系"], ["csysLocal", "局部坐标系"]];

const menus = ["文件", "模块", "视口", "视图", "显示", "前处理", "工具", "首选项", "帮助"];

const treeItems: { icon: string; label: string; eyes: number }[] = [
  { icon: "model", label: "模型", eyes: 2 },
  { icon: "connect", label: "连接", eyes: 1 },
  { icon: "material", label: "材料", eyes: 0 },
  { icon: "section", label: "截面属性", eyes: 0 },
  { icon: "analysis", label: "分析工况", eyes: 0 },
  { icon: "load", label: "载荷", eyes: 1 },
  { icon: "boundary", label: "边界条件", eyes: 1 },
  { icon: "contact", label: "接触", eyes: 1 },
  { icon: "assembly", label: "组合", eyes: 1 },
  { icon: "output", label: "输出", eyes: 0 },
  { icon: "optimize", label: "优化任务", eyes: 0 },
  { icon: "job", label: "计算任务", eyes: 0 },
  { icon: "set", label: "集合", eyes: 0 },
  { icon: "curve", label: "曲线", eyes: 0 },
  { icon: "layers", label: "铺层材料", eyes: 0 },
  { icon: "csys", label: "坐标系", eyes: 1 },
];

/* a leading "-" marks a command that is not available */
const commands: string[][] = [
  ["几何点", "距离", "-特征识别", "-特征识别测试"],
  ["线", "线编辑", "线长度"],
  ["面", "面编辑", "删除特征", "抽中面", "面积"],
  ["实体", "实体编辑", "-肋板", "体积"],
  ["-快捷编辑", "-几何点编辑", "自动几何清理"],
  ["布尔操作", "几何操作"],
];

const DockHeader = ({ name }: { name: string }) => (
  <DockTitle>
    <DockName>{name}</DockName>
    <DockButton aria-label={`浮动${name}`}><FloatGlyph /></DockButton>
    <DockButton aria-label={`关闭${name}`}><CloseGlyph /></DockButton>
  </DockTitle>
);

export default function App() {
  const [treeTab, setTreeTab] = useState("前处理");
  const [sideTab, setSideTab] = useState("功能面板");

  return (
    <Window>
      <GlobalStyle />
      <Gradients />
      <TitleBar>
        <Logo />
        <Title>MxSim.Mechanical v1.0 - [DefaultProject]</Title>
        <WindowControls>
          <WindowButton aria-label="最小化">
            <Svg $size={12} viewBox="0 0 12 12"><path d="M0 5.500H12" stroke="#000" /></Svg>
          </WindowButton>
          <WindowButton aria-label="还原">
            <Svg $size={12} viewBox="0 0 12 12"><path d="M0.500 2.500H9.500V11.500H0.500ZM2.500 2.500V0.500H11.500V9.500H9.500" fill="none" stroke="#000" /></Svg>
          </WindowButton>
          <WindowButton aria-label="关闭">
            <Svg $size={12} viewBox="0 0 12 12"><path d="M0 0L12 12M12 0L0 12" stroke="#000" strokeWidth="1.200" /></Svg>
          </WindowButton>
        </WindowControls>
      </TitleBar>

      <MenuBar>
        {menus.map((m) => <MenuItem key={m}>{m}</MenuItem>)}
        <MdiControls>
          <MdiButton aria-label="最小化子窗口"><MinGlyph /></MdiButton>
          <MdiButton aria-label="还原子窗口"><FloatGlyph /></MdiButton>
        </MdiControls>
      </MenuBar>

      <TopToolbar>
        {topGroups.map((group, g) => (
          <ToolGroup key={g} $lead={g === 0 ? 6 : 10}>
            <Grip />
            {group.map(([icon, label], i) =>
              icon === "|" ? <ToolDivider key={i} /> : (
                <ToolButton key={i} aria-label={label}><Icon name={icon} size={20} /></ToolButton>
              ))}
          </ToolGroup>
        ))}
        <ToolGroup $lead={10} $width={102}>
          <Grip />
          {windowTools.map(([icon, label]) => (
            <ToolButton key={icon} $wide aria-label={label}><Icon name={icon} size={21} /></ToolButton>
          ))}
        </ToolGroup>
        <ToolGroup $lead={10} $width={186}>
          <Grip />
          {selectTools.map(([icon, label]) => (
            <ToolButton key={icon} $wide $plain $pressed={icon === "boxSelect"} aria-label={label}>
              <Icon name={icon} size={25} />
            </ToolButton>
          ))}
        </ToolGroup>
      </TopToolbar>

      <Main>
        <Sidebar>
          <Dock $share={670}>
            <DockHeader name="模型树" />
            <Tabs role="tablist">
              {["前处理", "几何"].map((t) => (
                <Tab key={t} role="tab" aria-selected={t === treeTab} $active={t === treeTab} onClick={() => setTreeTab(t)}>{t}</Tab>
              ))}
            </Tabs>
            <TreePane>
              <TreeRoot>
                <Svg $size={10} viewBox="0 0 10 10" aria-hidden="true"><path d="M0 2.500H10L5 8Z" fill="#5a5a5a" /></Svg>
                DefaultProject
              </TreeRoot>
              <TreeList>
                {treeItems.map((item) => (
                  <TreeItem key={item.label}>
                    <Icon name={item.icon} size={21} />
                    <TreeLabel>{item.label}</TreeLabel>
                    {Array.from({ length: item.eyes }, (_, i) => (
                      <EyeButton key={i} aria-label={`显示${item.label}`}><EyeGlyph /></EyeButton>
                    ))}
                  </TreeItem>
                ))}
              </TreeList>
            </TreePane>
          </Dock>
          <Splitter $height={6} />
          <Dock $share={586}>
            <DockHeader name="参数" />
            <ParamPane>
              <ParamTable>
                <thead><tr><ParamHead>名称</ParamHead><ParamHead>值</ParamHead></tr></thead>
              </ParamTable>
            </ParamPane>
          </Dock>
        </Sidebar>

        <Workspace>
          <Viewport>
            <AxisTriad viewBox="0 0 100 100" aria-label="坐标轴">
              <g fill="none" strokeWidth="1">
                <path d="M9.500 86V40M5.500 50.500L9.500 40L13.500 50.500Z" stroke="#10ee30" />
                <path d="M14 91.500H61M50.500 87.500L61 91.500L50.500 95.500Z" stroke="#f01420" />
                <path d="M5.500 87.500H13.500V95.500H5.500ZM5.500 87.500L13.500 95.500M13.500 87.500L5.500 95.500" stroke="#0b14f0" />
              </g>
              <g fill="#fff" fontSize="12" fontFamily="Liberation Sans, sans-serif">
                <text x="9" y="23">Y</text>
                <text x="78" y="92">X</text>
                <text x="9" y="91">Z</text>
              </g>
            </AxisTriad>
          </Viewport>

          <ModuleBar>
            <ModuleGroup $lead={6} $width={601} $filled>
              <Grip />
              {moduleTools.map(([icon, label]) => (
                <ToolButton key={icon} $wide $plain aria-label={label}><Icon name={icon} size={25} /></ToolButton>
              ))}
            </ModuleGroup>
            <ModuleGroup $lead={5} $width={267}>
              <Grip />
              {extraTools.map(([icon, label]) => (
                <ToolButton key={icon} $wide $plain aria-label={label}><Icon name={icon} size={25} /></ToolButton>
              ))}
            </ModuleGroup>
          </ModuleBar>

          <Panel>
            <Splitter $height={9} />
            <PanelBody>
              <PanelStrip>
                <DockButton aria-label="关闭功能面板"><CloseGlyph /></DockButton>
                <DockButton aria-label="浮动功能面板"><FloatGlyph /></DockButton>
                <PanelName>功能面板</PanelName>
              </PanelStrip>
              <CommandGrid>
                {commands.map((column, c) => (
                  <CommandColumn key={c}>
                    {column.map((name) => (
                      <Command key={name} disabled={name.startsWith("-")}>{name.replace("-", "")}</Command>
                    ))}
                  </CommandColumn>
                ))}
              </CommandGrid>
              <SideTabs role="tablist">
                {["功能面板", "命令行"].map((t) => (
                  <SideTab key={t} role="tab" aria-selected={t === sideTab} $active={t === sideTab} onClick={() => setSideTab(t)}>{t}</SideTab>
                ))}
              </SideTabs>
            </PanelBody>
          </Panel>
        </Workspace>
      </Main>
      <StatusBar />
    </Window>
  );
}
